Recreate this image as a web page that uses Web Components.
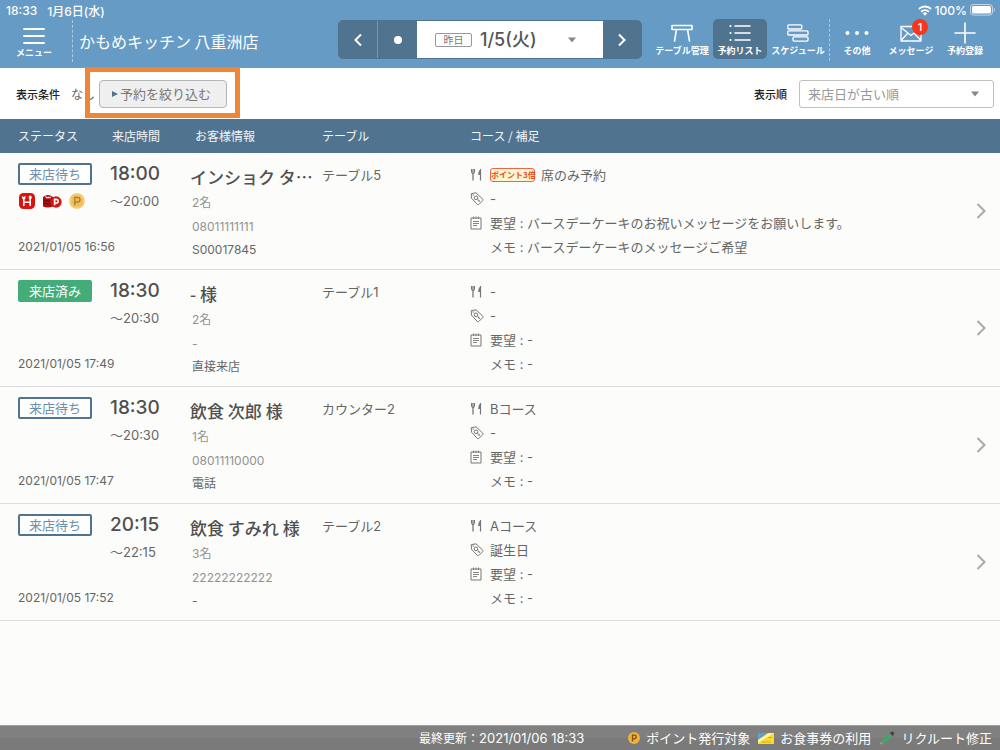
<!DOCTYPE html>
<html lang="ja">
<head>
<meta charset="utf-8">
<meta name="viewport" content="width=device-width, initial-scale=1">
<title>予約リスト - かもめキッチン 八重洲店</title>
<style>
  :root {
    --blue: #659bc5;
    --navy: #50748f;
    --text: #666;
    --muted: #929292;
    --line: #dcdcdc;
    --jp: "Noto Sans CJK JP", sans-serif;
  }
  body {
    margin: 0;
    background: #fcfcfa;
    color: var(--text);
    font-family: Inter, "Noto Sans CJK JP", sans-serif;
    font-size: 13px;
  }
</style>
</head>
<body>
<reservation-app></reservation-app>

<script>
const ICONS = {
  menu: [22, 18, '<path d="M1 2H21M1 9H21M1 16H21" stroke="#fff" stroke-width="1.8" stroke-linecap="round"/>'],
  table: [22, 18, '<path d="M1 1.500H21V5.500H1ZM5.500 5.500L3.500 17M16.500 5.500L18.500 17" fill="none" stroke="#fff" stroke-width="1.600" stroke-linecap="round" stroke-linejoin="round"/>'],
  list: [22, 18, '<path d="M6 2H21M6 9H21M6 16H21" stroke="#fff" stroke-width="1.500" stroke-linecap="round"/><g fill="#fff"><circle cx="1.500" cy="2" r="1.100"/><circle cx="1.500" cy="9" r="1.100"/><circle cx="1.500" cy="16" r="1.100"/></g>'],
  schedule: [22, 18, '<g fill="none" stroke="#fff" stroke-width="1.300"><rect x=".8" y=".8" width="14" height="4.200" rx="1"/><rect x=".8" y="6.800" width="20.200" height="4.200" rx="1"/><rect x="6" y="12.900" width="15" height="4.200" rx="1"/></g>'],
  more: [26, 18, '<g fill="#fff"><circle cx="3.500" cy="9" r="2"/><circle cx="13" cy="9" r="2"/><circle cx="22.500" cy="9" r="2"/></g>'],
  mail: [22, 18, '<path d="M1 2.500H21V17H1ZM1 3.500L11 11.500L21 3.500M1 16.500L7.500 9.500M21 16.500L14.500 9.500" fill="none" stroke="#fff" stroke-width="1.300" stroke-linejoin="round"/>'],
  plus: [22, 22, '<path d="M11 1V21M1 11H21" stroke="#fff" stroke-width="1.600" stroke-linecap="round"/>'],
  wifi: [14, 11, '<path d="M7 10.800L4.800 8.400A3.200 3.200 0 0 1 9.200 8.400Z" fill="#fff"/><path d="M3.100 6.700A5.600 5.600 0 0 1 10.900 6.700M.9 4A8.800 8.800 0 0 1 13.100 4" fill="none" stroke="#fff" stroke-width="1.900"/>'],
  battery: [25, 12, '<rect x=".5" y=".5" width="22" height="10.600" rx="3" fill="none" stroke="#fff" stroke-opacity=".6"/><rect x="2" y="2" width="19" height="7.600" rx="1.600" fill="#fff"/><path d="M23.800 4V8C25.100 7.400 25.100 4.600 23.800 4Z" fill="#fff" fill-opacity=".6"/>'],
  left: [10, 14, '<path d="M8 1.500L2.500 7L8 12.500" fill="none" stroke="#fff" stroke-width="2"/>'],
  right: [10, 14, '<path d="M2 1.500L7.500 7L2 12.500" fill="none" stroke="#fff" stroke-width="2"/>'],
  dot: [10, 10, '<circle cx="5" cy="5" r="4" fill="#fff"/>'],
  down: [10, 6, '<path d="M1 .5H9L5 5.500Z" fill="#888"/>'],
  play: [6, 6, '<path d="M0 0L6 3L0 6Z" fill="#50748f"/>'],
  detail: [10, 16, '<path d="M1.500 1L8.500 8L1.500 15" fill="none" stroke="#aaa" stroke-width="2"/>'],
  cutlery: [13, 14, '<g fill="none" stroke="#777"><path d="M1.500 1V4.200Q1.500 5.600 3 5.600Q4.500 5.600 4.500 4.200V1" stroke-width="1"/><path d="M3 1V12.500" stroke-width="1.300"/><path d="M10.500 1V12.500" stroke-width="1.200"/></g><path d="M10.800 1Q8 3 8.200 7H10.800Z" fill="#777"/>'],
  tag: [14, 14, '<g fill="none" stroke="#777" stroke-width="1" stroke-linejoin="round"><path d="M1.200 1.700L6 .8L12.800 7.200Q13.400 7.900 12.700 8.600L8.700 12.600Q8 13.200 7.400 12.500L1.600 6.300Z"/><circle cx="6" cy="5.800" r="1.800"/><path d="M7.400 7.100L10 9.500M8.500 8.200L7.700 9.100M9.600 8.900L8.900 9.900"/></g><circle cx="3.200" cy="3" r=".7" fill="#777"/>'],
  note: [12, 14, '<path d="M1 2H11V13H1Z" fill="none" stroke="#777"/><path d="M3.500 .5V3M6 .5V3M8.500 .5V3M3 5.500H9M3 7.500H9M3 9.500H7" stroke="#777" stroke-width=".9"/>'],
  hotpepper: [16, 16, '<rect width="16" height="16" rx="4.500" fill="#d8140f"/><path d="M4.800 6V13M11.200 6V13M4.800 9.200H11.200" stroke="#fff" stroke-width="1.500"/><path d="M3.200 2.800V5.500Q4.800 7.200 6.400 5.500V2.800L4.800 4.200Z" fill="#fff"/><ellipse cx="11.200" cy="4.600" rx="1.500" ry="2.100" fill="#fff"/>'],
  coupon: [20, 14, '<path d="M1 3Q6 -1 11 3V12.500Q6 14.500 1 12.500Z" fill="#a80d14"/><path d="M1 6Q6 8 11 6M1 9Q6 11 11 9" fill="none" stroke="#760b0f"/><path d="M3 1.300L5 3.300L6.500 2.600L8 3.600L9.500 1.300L8.500 4.200H4Z" fill="#fff"/><circle cx="14" cy="8" r="5.700" fill="#d8140f"/><path d="M12.600 11.300V5.400H14.300A1.800 1.800 0 0 1 14.300 9H12.600" fill="none" stroke="#fff" stroke-width="1.600"/>'],
  point: [16, 16, '<circle cx="8" cy="8" r="7.700" fill="#f1bd58"/><circle cx="8" cy="8" r="6.400" fill="none" stroke="#f7d584"/><path d="M5.800 12.300V4.300H8.600A2.400 2.400 0 0 1 8.600 9.100H5.800" fill="none" stroke="#a57d2c" stroke-width="1.300"/>'],
  pointSmall: [12, 12, '<circle cx="6" cy="6" r="6" fill="#f1b13e"/><path d="M4.500 9.400V3.200H6.400A1.800 1.800 0 0 1 6.400 6.800H4.500" fill="none" stroke="#80530e" stroke-width="1.300"/>'],
  ticket: [16, 11, '<path d="M0 0H16V11H0Z" fill="#f8dc28"/><path d="M0 0H10L0 7Z" fill="#5ba3cf"/><path d="M11 0H16L0 10V7Z" fill="#fff5a2"/><path d="M4 9H13M10 4.500H14" stroke="#d4ad1c"/>'],
  pen: [16, 14, '<path d="M2.500 9.500L9.800 2.800L13 6L5.500 12.800Z" fill="#45a563"/><path d="M10.800 2L12 .9Q13.500 0 14.700 1.300Q15.800 2.600 14.800 3.800L13.700 5Z" fill="#444"/><path d="M.6 13.600L2 10.500L4.600 13Z" fill="#999"/>']
};

class AppIcon extends HTMLElement {
  connectedCallback() {
    const [w, h, body] = ICONS[this.getAttribute('name')];
    this.attachShadow({ mode: 'open' }).innerHTML = `
      <style>:host { display: inline-flex; flex: none; } svg { display: block; }</style>
      <svg width="${w}" height="${h}" viewBox="0 0 ${w} ${h}" aria-hidden="true">${body}</svg>`;
  }
}
customElements.define('app-icon', AppIcon);

function define(name, markup) {
  const template = document.createElement('template');
  template.innerHTML = markup;
  customElements.define(name, class extends HTMLElement {
    constructor() {
      super();
      this.attachShadow({ mode: 'open' }).append(template.content.cloneNode(true));
    }
  });
}

define('status-bar', `
  <style>
    :host { display: flex; justify-content: space-between; align-items: center; height: 20px; padding: 0 5px 0 6px; color: #fff; font-size: 12px; font-weight: 500; }
    div { display: flex; align-items: center; gap: 3px; }
    .clock { gap: 10px; }
  </style>
  <div class="clock"><span>18:33</span><span>1月6日(水)</span></div>
  <div><app-icon name="wifi"></app-icon><span>100%</span><app-icon name="battery"></app-icon></div>
`);

define('nav-item', `
  <style>
    :host { display: block; width: 54px; }
    button { display: flex; flex-direction: column; align-items: center; justify-content: space-between; width: 100%; height: 40px; padding: 4px 0 2px; border: 0; border-radius: 5px; background: none; color: #fff; font: 700 9px/12px var(--jp); white-space: nowrap; }
    :host([active]) button { background: var(--navy); }
    .icon { display: flex; align-items: center; justify-content: center; height: 20px; position: relative; }
    ::slotted([slot=badge]) { position: absolute; top: -4px; right: -6px; width: 16px; height: 16px; border-radius: 8px; background: #f8361b; font: 500 11px/16px Inter, sans-serif; text-align: center; }
  </style>
  <button type="button"><span class="icon"><slot name="icon"></slot><slot name="badge"></slot></span><slot></slot></button>
`);

define('date-switcher', `
  <style>
    :host { display: flex; box-sizing: border-box; width: 304px; height: 39px; border: 1px solid var(--navy); border-radius: 5px; overflow: hidden; background: var(--navy); }
    button { display: flex; align-items: center; justify-content: center; width: 38px; padding: 0; border: 0; background: var(--navy); }
    .today { width: 40px; border-left: 1px solid var(--blue); }
    .date { flex: 1; justify-content: flex-start; padding: 0 26px 0 18px; background: #fff; color: #555; font: 500 18px/24px Inter, "Noto Sans CJK JP", sans-serif; }
    .tag { box-sizing: border-box; width: 37px; height: 14px; margin-right: 8px; border: 1px solid #999; border-radius: 2px; color: #777; font: 10px/12px var(--jp); }
    .date app-icon { margin-left: auto; }
  </style>
  <button type="button" aria-label="前日"><app-icon name="left"></app-icon></button>
  <button type="button" class="today" aria-label="今日"><app-icon name="dot"></app-icon></button>
  <button type="button" class="date"><span class="tag">昨日</span><span>1/5(火)</span><app-icon name="down"></app-icon></button>
  <button type="button" aria-label="翌日"><app-icon name="right"></app-icon></button>
`);

define('app-header', `
  <style>
    :host { display: block; background: var(--blue); color: #fff; }
    .bar { display: flex; align-items: flex-start; height: 48px; padding-right: 8px; }
    .brand { display: flex; align-items: center; flex: 1; }
    .menu { display: flex; flex-direction: column; align-items: center; gap: 1px; width: 72px; padding: 4px 4px 0 0; border: 0; background: none; color: #fff; font: 700 9px/14px var(--jp); }
    .sep { width: 0; height: 42px; border-left: 1px dashed #a9cbe5; }
    h1 { margin: 0 0 0 6px; font: 400 16px/24px var(--jp); white-space: nowrap; }
    nav { display: flex; margin-left: 13px; margin-top: -1px; }
    .views { display: flex; gap: 4px; margin-right: 4px; }
    .actions { display: flex; }
  </style>
  <status-bar></status-bar>
  <div class="bar">
    <div class="brand">
      <button class="menu" type="button"><app-icon name="menu"></app-icon>メニュー</button>
      <span class="sep"></span>
      <h1>かもめキッチン 八重洲店</h1>
    </div>
    <date-switcher></date-switcher>
    <nav>
      <div class="views">
        <nav-item><app-icon slot="icon" name="table"></app-icon>テーブル管理</nav-item>
        <nav-item active><app-icon slot="icon" name="list"></app-icon>予約リスト</nav-item>
        <nav-item><app-icon slot="icon" name="schedule"></app-icon>スケジュール</nav-item>
      </div>
      <span class="sep"></span>
      <div class="actions">
        <nav-item><app-icon slot="icon" name="more"></app-icon>その他</nav-item>
        <nav-item><app-icon slot="icon" name="mail"></app-icon><span slot="badge">1</span>メッセージ</nav-item>
        <nav-item><app-icon slot="icon" name="plus"></app-icon>予約登録</nav-item>
      </div>
    </nav>
  </div>
`);

define('filter-bar', `
  <style>
    :host { display: flex; align-items: center; box-sizing: border-box; height: 51px; padding: 0 6px 0 16px; background: #fff; font-family: var(--jp); font-size: 12px; }
    .label { color: #222; font-size: 11px; font-weight: 500; }
    .value { margin-left: 11px; width: 28px; }
    .focus { position: relative; }
    .focus::after { content: ""; position: absolute; inset: -13px -13px -10px -14px; border: 5px solid #ee8636; pointer-events: none; }
    .narrow { display: flex; align-items: center; justify-content: center; gap: 2px; box-sizing: border-box; width: 128px; height: 28px; padding: 0 3px 0 0; border: 1px solid #b5b5b5; border-radius: 4px; background: #efefef; color: #777; font: 13px/20px var(--jp); }
    .sort { position: relative; display: flex; align-items: center; margin-left: 12px; }
    .sort app-icon { position: absolute; right: 14px; pointer-events: none; }
    select { appearance: none; box-sizing: border-box; width: 195px; height: 28px; padding: 0 30px 0 8px; border: 1px solid #c0c0c0; border-radius: 3px; background: #fff; color: #999; font: 13px/20px var(--jp); }
    label { margin-left: auto; }
  </style>
  <span class="label">表示条件</span><span class="value">なし</span>
  <div class="focus"><button class="narrow" type="button"><app-icon name="play"></app-icon>予約を絞り込む</button></div>
  <label class="label" for="sort">表示順</label>
  <div class="sort"><select id="sort"><option>来店日が古い順</option></select><app-icon name="down"></app-icon></div>
`);

define('status-badge', `
  <style>
    :host { display: block; box-sizing: border-box; width: 74px; height: 22px; border: 2px solid var(--navy); border-radius: 2px; background: #fff; color: #6c90ae; font: 13px/18px var(--jp); text-align: center; }
    :host([done]) { border-color: #43ac79; background: #43ac79; color: #fff; }
  </style>
  <slot></slot>
`);

define('course-line', `
  <style>
    :host { display: flex; align-items: center; height: 24px; line-height: 24px; white-space: nowrap; }
    .icon { display: flex; width: 20px; }
    ::slotted(em) { margin-right: 6px; }
  </style>
  <span class="icon"><slot name="icon"></slot></span><slot></slot>
`);

const RESERVATIONS = [
  { status: '来店待ち', icons: ['hotpepper', 'coupon', 'point'], made: '2021/01/05 16:56', start: '18:00', end: '〜20:00', name: 'インショク タ…', size: '2名', phone: '08011111111', source: 'S00017845', table: 'テーブル5', promo: 'ポイント3倍', course: '席のみ予約', tag: '-', request: 'バースデーケーキのお祝いメッセージをお願いします。', memo: 'バースデーケーキのメッセージご希望' },
  { status: '来店済み', done: true, made: '2021/01/05 17:49', start: '18:30', end: '〜20:30', name: '- 様', size: '2名', phone: '-', source: '直接来店', table: 'テーブル1', course: '-', tag: '-', request: '-', memo: '-' },
  { status: '来店待ち', made: '2021/01/05 17:47', start: '18:30', end: '〜20:30', name: '飲食 次郎 様', size: '1名', phone: '08011110000', source: '電話', table: 'カウンター2', course: 'Bコース', tag: '-', request: '-', memo: '-' },
  { status: '来店待ち', made: '2021/01/05 17:52', start: '20:15', end: '〜22:15', name: '飲食 すみれ 様', size: '3名', phone: '22222222222', source: '-', table: 'テーブル2', course: 'Aコース', tag: '誕生日', request: '-', memo: '-' }
];

class ReservationTable extends HTMLElement {
  connectedCallback() {
    this.attachShadow({ mode: 'open' }).innerHTML = `
      <style>
        :host { display: block; }
        table { width: 100%; border-collapse: separate; border-spacing: 0; table-layout: fixed; }
        .c-status { width: 110px; } .c-time { width: 80px; } .c-guest { width: 132px; } .c-table { width: 148px; } .c-more { width: 30px; }
        th { height: 34px; padding: 0; box-sizing: border-box; background: var(--navy); color: #f2f5f7; font: 400 12px/16px var(--jp); text-align: left; }
        th:first-child, td:first-child { padding-left: 18px; }
        th:nth-child(2) { padding-left: 2px; }
        th:nth-child(3) { padding-left: 5px; }
        td { padding: 10px 0; border-bottom: 1px solid var(--line); vertical-align: top; line-height: 24px; white-space: nowrap; }
        td:last-child { vertical-align: middle; }
        .stack { display: flex; flex-direction: column; height: 96px; }
        .icons { display: flex; align-items: center; gap: 7px; height: 24px; margin-top: 4px; padding-left: 1px; }
        .made { margin-top: 22px; font-size: 12px; }
        .start { color: #505050; font-size: 19px; font-weight: 500; line-height: 22px; }
        .end { margin-top: 4px; font-size: 13px; }
        .name { color: #505050; font: 500 17px/28px var(--jp); }
        .sub { padding-left: 2px; color: var(--muted); font-size: 12px; }
        .source { color: var(--text); line-height: 22px; }
        em { box-sizing: border-box; width: 45px; height: 14px; border: 1px solid #f0644a; border-radius: 3px; background: #fff6cf; color: #ee4c30; font: 700 8px/12px var(--jp); text-align: center; }
        button { display: flex; margin-left: 6px; padding: 0; border: 0; background: none; }
      </style>
      <table>
        <colgroup><col class="c-status"><col class="c-time"><col class="c-guest"><col class="c-table"><col><col class="c-more"></colgroup>
        <thead><tr><th>ステータス</th><th>来店時間</th><th>お客様情報</th><th>テーブル</th><th>コース / 補足</th><th></th></tr></thead>
        <tbody>${RESERVATIONS.map(r => `
          <tr>
            <td><div class="stack"><status-badge ${r.done ? 'done' : ''}>${r.status}</status-badge>
              <div class="icons">${(r.icons || []).map(i => `<app-icon name="${i}"></app-icon>`).join('')}</div>
              <div class="made">${r.made}</div></div></td>
            <td><div class="start">${r.start}</div><div class="end">${r.end}</div></td>
            <td><div class="stack"><div class="name">${r.name}</div><div class="sub">${r.size}</div><div class="sub">${r.phone}</div><div class="sub source">${r.source}</div></div></td>
            <td>${r.table}</td>
            <td>
              <course-line><app-icon slot="icon" name="cutlery"></app-icon>${r.promo ? `<em>${r.promo}</em>` : ''}<span>${r.course}</span></course-line>
              <course-line><app-icon slot="icon" name="tag"></app-icon><span>${r.tag}</span></course-line>
              <course-line><app-icon slot="icon" name="note"></app-icon><span>要望 : ${r.request}</span></course-line>
              <course-line><span>メモ : ${r.memo}</span></course-line>
            </td>
            <td><button type="button" aria-label="詳細"><app-icon name="detail"></app-icon></button></td>
          </tr>`).join('')}
        </tbody>
      </table>`;
  }
}
customElements.define('reservation-table', ReservationTable);

define('legend-bar', `
  <style>
    :host { display: flex; align-items: center; justify-content: flex-end; gap: 8px; box-sizing: border-box; height: 25px; padding: 0 8px; border-top: 1px solid #a0a0a0; background: linear-gradient(#808080 50%, #7a7a7a 50%); color: #fff; font-size: 13px; line-height: 20px; white-space: nowrap; }
    .updated { margin-right: 36px; }
    .caption { font-size: 12px; }
    .item { display: flex; align-items: center; gap: 6px; }
  </style>
  <span class="updated"><span class="caption">最終更新：</span>2021/01/06 18:33</span>
  <span class="item"><app-icon name="pointSmall"></app-icon>ポイント発行対象</span>
  <span class="item"><app-icon name="ticket"></app-icon>お食事券の利用</span>
  <span class="item"><app-icon name="pen"></app-icon>リクルート修正</span>
`);

define('reservation-app', `
  <style>
    :host { display: flex; flex-direction: column; min-height: 100vh; }
    main { flex: 1; }
  </style>
  <app-header></app-header>
  <main><filter-bar></filter-bar><reservation-table></reservation-table></main>
  <legend-bar></legend-bar>
`);
</script>
</body>
</html>
